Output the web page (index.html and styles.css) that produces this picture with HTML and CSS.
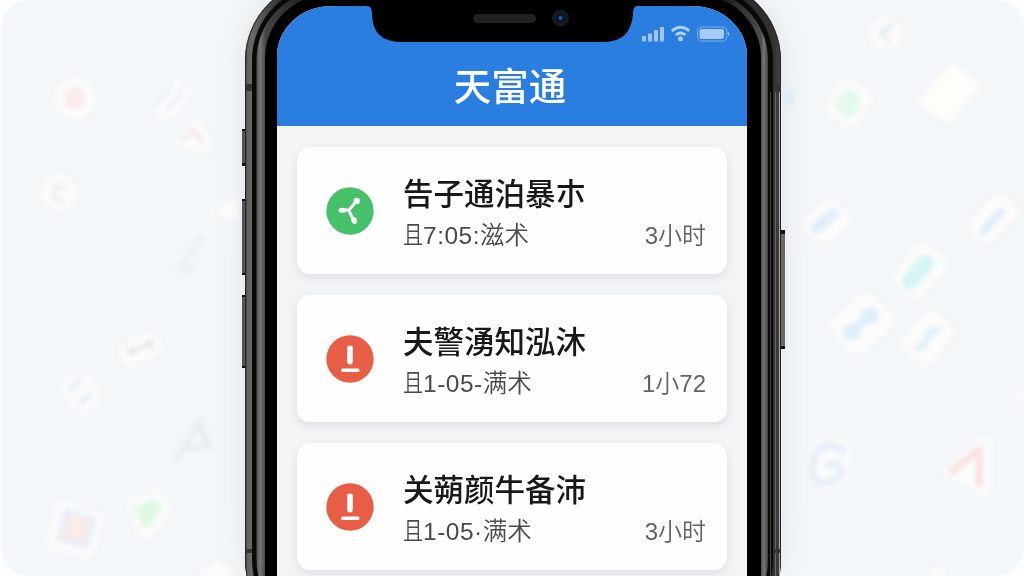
FILE: index.html
```html
<!DOCTYPE html>
<html lang="zh-CN">
<head>
<meta charset="utf-8">
<title>天富通</title>
<link rel="stylesheet" href="styles.css">
</head>
<body>
<main class="scene">
  <svg class="backdrop" viewBox="0 0 1024 576" aria-hidden="true">
    <defs>
      <filter id="soft" x="-20%" y="-20%" width="140%" height="140%" color-interpolation-filters="sRGB"><feGaussianBlur stdDeviation="2.4"/></filter>
      <filter id="shade" x="-20%" y="-20%" width="140%" height="140%"><feGaussianBlur stdDeviation="12"/></filter>
    </defs>
    <rect x="241" y="-20" width="544" height="640" rx="80" fill="#c5c9d0" opacity=".35" filter="url(#shade)"/>
    <g filter="url(#soft)" stroke-linecap="round" stroke-linejoin="round" fill="none">
      <g fill="#fcfdfc" opacity=".85">
        <circle cx="75" cy="99" r="20"/><circle cx="59" cy="193" r="18"/>
        <path d="M166 80h12l13 12-18 26h-16l-2-12z"/>
        <path d="M190 121l8-1 14 22-4 11-18-2-14-6z"/>
        <path d="M218 211l10-11 8-1v19l-14 1z"/>
        <rect x="119" y="337" width="42" height="25" rx="12" transform="rotate(-25 140 349)"/>
        <rect x="66" y="374" width="31" height="38" rx="12" transform="rotate(-30 81 393)"/>
        <path d="M127 502l30-13 12 15-3 16-17 18-11-4z"/>
        <rect x="51" y="506" width="48" height="48" rx="6" transform="rotate(15 75 530)"/>
        <circle cx="886" cy="33" r="16"/>
        <rect x="831" y="82" width="37" height="41" rx="9" transform="rotate(30 849 102)"/>
        <path d="M952 63l29 22-33 40-31-23z" fill="#fffefa"/>
        <rect x="805" y="206" width="42" height="33" rx="9" transform="rotate(-42 825 221)"/>
        <rect x="968" y="203" width="50" height="31" rx="10" transform="rotate(-48 993 218)"/>
        <rect x="895" y="253" width="50" height="37" rx="9" transform="rotate(-50 919 271)"/>
        <rect x="834" y="302" width="55" height="45" rx="9" transform="rotate(-42 861 323)"/>
        <rect x="903" y="320" width="50" height="36" rx="9" transform="rotate(-48 928 338)"/>
        <path d="M827 438q26 0 23 21-5 31-26 31-18-3-17-24 2-21 20-28z"/>
        <path d="M940 472l44-36q7 0 7 10v44q-1 7-9 6z"/>
        <path d="M1024 390l-8 8 8 8zM927 576l6-9 9 2 3 7zM195 576l21-14 14 6 4 8z"/>
      </g>
      <g opacity=".7">
        <circle cx="75" cy="98" r="9" fill="#fae5e6" stroke="#f9dfe2" stroke-width="4"/>
        <path d="M158 104l14-20M168 109l14-19" stroke="#dfe8f4" stroke-width="4"/>
        <path d="M184 140l9-11 9 13" stroke="#f3dfe1" stroke-width="5"/>
        <path d="M63 187q-9-3-10 6 1 8 9 7" stroke="#e5e9ed" stroke-width="5"/>
        <path d="M201 239l-21 30h12" stroke="#e7ebf0" stroke-width="6"/>
        <path d="M131 351l18-7" stroke="#dde1e5" stroke-width="4"/><path d="M131 351h2M149 344l1 1" stroke="#d9dfe3" stroke-width="8"/>
        <path d="M72 389l6-7M82 402l6-6" stroke="#dfe9f5" stroke-width="7"/>
        <path d="M202 420l-25 38M199 424l10 22-25 3" stroke="#e3e8ed" stroke-width="6"/>
        <path d="M133 508l23-9 6 8-6 9-8 11-5-1-3-8z" fill="#d2f7dc" stroke="#d2f7dc"/>
        <rect x="62" y="514" width="29" height="29" fill="#fae3e6" stroke="#dce9f5" stroke-width="5" transform="rotate(15 76 528)"/>
        <path d="M892 25l-11 7 7 9" stroke="#d6e2ef" stroke-width="4"/>
        <path d="M848 88l15 10-9 18h-11l-9-12z" fill="#d8f6e4"/>
        <ellipse cx="789" cy="97" rx="4" ry="8" fill="#d7e5f7"/>
        <path d="M816 228l17-14" stroke="#d4e5f6" stroke-width="11"/><path d="M983 231l18-20" stroke="#cfe3f6" stroke-width="7"/>
        <path d="M910 281l16-18" stroke="#c4eff0" stroke-width="16"/>
        <path d="M853 330l16-13" stroke="#d2e7f8" stroke-width="9"/><path d="M851 332h2M870 315h1" stroke="#d2e7f8" stroke-width="16"/>
        <path d="M918 348l17-18" stroke="#d4e8f7" stroke-width="6"/><path d="M918 347l7-2M928 333l10-3" stroke="#d4e8f7" stroke-width="7"/>
        <path d="M843 451q-17-13-28 5-8 23 7 27 17-1 19-13-3-9-12-5" stroke="#dbe5f4" stroke-width="7"/>
        <path d="M952 471l28-22-1 35" stroke="#f9d3d6" stroke-width="7"/>
      </g>
    </g>
  </svg>

  <svg class="frame" viewBox="0 0 1024 576" aria-hidden="true">
    <defs>
      <linearGradient id="rim" gradientUnits="userSpaceOnUse" x1="245" x2="781" y1="0" y2="0">
        <stop offset="0" stop-color="#222"/><stop offset=".004" stop-color="#5f5f5f"/><stop offset=".012" stop-color="#6b6a69"/>
        <stop offset=".06" stop-color="#383838"/><stop offset=".2" stop-color="#111"/><stop offset=".8" stop-color="#111"/>
        <stop offset=".94" stop-color="#2c2b2a"/><stop offset=".987" stop-color="#34312f"/><stop offset="1" stop-color="#4a4441"/>
      </linearGradient>
      <linearGradient id="band" gradientUnits="userSpaceOnUse" x1="256" x2="769" y1="0" y2="0">
        <stop offset="0" stop-color="#4b4b4b"/><stop offset=".008" stop-color="#787878"/><stop offset=".019" stop-color="#444"/>
        <stop offset=".14" stop-color="#080808"/><stop offset=".88" stop-color="#080808"/>
        <stop offset=".984" stop-color="#4a4a4a"/><stop offset=".99" stop-color="#757575"/><stop offset="1" stop-color="#333"/>
      </linearGradient>
    </defs>
    <g fill="#555">
      <path d="M242 130h4v35h-4zM242 200h4v74h-4zM242 296h4v71h-4z"/>
      <path d="M780 231h5v118h-5z" fill="#6b6968"/>
    </g>
    <path d="M242 129h4v2h-4zM242 163h4v3h-4zM242 199h4v2h-4zM242 273h4v2h-4zM242 295h4v2h-4zM242 366h4v2h-4zM780 230h5v4h-5zM780 346h5v3h-5z" fill="#111"/>
    <rect x="245" y="-20" width="536" height="660" rx="80" fill="url(#rim)"/>
    <rect x="245.500" y="-19.500" width="535" height="660" rx="80" fill="none" stroke="#242424"/>
    <path d="M779.500 92v484" stroke="#aaa19c"/>
    <path d="M775.500 92v484" stroke="#6c6865"/>
    <path d="M246 84h7v7h-7zM773 84h8v7h-8zM246 549h7v4h-7zM773 549h8v4h-8z" fill="#333"/>
    <rect x="252" y="-15" width="521" height="650" rx="75" fill="#090909"/>
    <path d="M770.500 92v484" stroke="#444"/>
    <rect x="256.500" y="-10" width="511.500" height="640" rx="70" fill="url(#band)"/>
    <rect x="265" y="-5" width="496" height="640" rx="63" fill="#000"/>
  </svg>

  <section class="screen">
    <header class="bar">
      <svg class="status" viewBox="0 0 88 18" aria-hidden="true">
        <g fill="#a0c7f3"><rect y="11" width="4" height="5.500" rx="1"/><rect x="6" y="8.500" width="4" height="8" rx="1"/><rect x="12" y="5" width="4" height="11.500" rx="1"/><rect x="18" y="2" width="4" height="14.500" rx="1"/></g>
        <path d="M29.700 6q9-7.500 17.600 0M33.700 10q4.800-4 9.600 0" fill="none" stroke="#acd0f6" stroke-width="2.800"/>
        <circle cx="38.500" cy="13.700" r="2.500" fill="#acd0f6"/>
        <rect x="55.500" y="2" width="29.500" height="14" rx="4.500" fill="none" stroke="#7db0ee"/>
        <rect x="57.500" y="4" width="24.500" height="10" rx="2" fill="#a6ccf5"/>
        <path d="M86 7q3 2 0 4z" fill="#a0c7f3"/>
      </svg>
      <h1 class="bar-title">天富通</h1>
    </header>

    <div class="list">
      <article class="card">
        <svg class="icon" viewBox="0 0 48 48" aria-hidden="true">
          <circle cx="24" cy="24" r="23.700" fill="#47c26b"/>
          <path d="M30.500 14L23 23M16 23h6.500l5 10" fill="none" stroke="#fff" stroke-width="2.800" stroke-linejoin="round"/>
          <circle cx="30.700" cy="14" r="3.200" fill="#fff"/><ellipse cx="16.500" cy="23.200" rx="4" ry="2.500" fill="#fff"/><ellipse cx="28" cy="33.500" rx="2.800" ry="3.600" transform="rotate(-25 28 33)" fill="#fff"/>
        </svg>
        <div class="body">
          <h2 class="name">告子通泊暴朩</h2>
          <div class="meta"><p><span class="mark">且</span><span class="num">7:05:</span>滋术</p><time>3小时</time></div>
        </div>
      </article>
      <article class="card">
        <svg class="icon" viewBox="0 0 48 48" aria-hidden="true">
          <circle cx="24" cy="24" r="23.700" fill="#e85d45"/>
          <path d="M21.200 12.500q0-2 2.800-2t2.800 2v14.500q-.2 2.500-2.800 2.500t-2.800-2.500z" fill="#fff"/><rect x="15" y="33.500" width="18.500" height="3.500" rx="1.500" fill="#fff"/>
        </svg>
        <div class="body">
          <h2 class="name">夫警湧知泓沐</h2>
          <div class="meta"><p><span class="mark">且</span><span class="num">1-05-</span>满术</p><time>1小72</time></div>
        </div>
      </article>
      <article class="card">
        <svg class="icon" viewBox="0 0 48 48" aria-hidden="true">
          <circle cx="24" cy="24" r="23.700" fill="#e85d45"/>
          <path d="M21.200 12.500q0-2 2.800-2t2.800 2v14.500q-.2 2.500-2.800 2.500t-2.800-2.500z" fill="#fff"/><rect x="15" y="33.500" width="18.500" height="3.500" rx="1.500" fill="#fff"/>
        </svg>
        <div class="body">
          <h2 class="name">关蒴颜牛备沛</h2>
          <div class="meta"><p><span class="mark">且</span><span class="num">1-05·</span>满术</p><time>3小时</time></div>
        </div>
      </article>
    </div>
  </section>

  <svg class="notch" viewBox="0 0 270 44" aria-hidden="true">
    <path d="M0 0v6q5 0 5 7 0 29 29 29h204q26-1 28-28 0-8 4-8V0z" fill="#000"/>
    <rect x="106" y="14" width="63" height="9" rx="4.500" fill="#202021"/>
    <circle cx="193.500" cy="18" r="8.500" fill="#17191c"/><circle cx="193.500" cy="18" r="4.500" fill="#07152b"/><circle cx="193.500" cy="18" r="2" fill="#245da5"/>
  </svg>
</main>
</body>
</html>
```
FILE: styles.css
```css
* { box-sizing: border-box; }

body {
  margin: 0;
  background: #fdfdfe;
  font-family: "Liberation Sans", "Noto Sans CJK SC", sans-serif;
}

h1, h2, p { margin: 0; }

.scene {
  position: relative;
  width: 1024px;
  height: 576px;
  overflow: hidden;
  border-radius: 28px;
  background: #f4f7f9;
  border-left: 2px solid #fafbfc;
}

.backdrop,
.frame {
  position: absolute;
  inset: 0 0 0 -2px;
  width: 1024px;
  height: 576px;
}

.screen {
  position: relative;
  width: 470px;
  height: 570px;
  margin: 6px 0 0 275px;
  overflow: hidden;
  border-radius: 54px 54px 0 0 / 50px 50px 0 0;
  background: #f3f4f6;
}

.bar {
  display: flex;
  flex-direction: column;
  height: 120px;
  padding: 19px 17px 0 0;
  background: #2a7ee0;
  color: #fff;
}

.status {
  align-self: flex-end;
  width: 88px;
  height: 18px;
}

.bar-title {
  padding: 14px 0 0 13px;
  text-align: center;
  font: 500 37.5px/54px "Noto Sans CJK SC", sans-serif;
}

.list {
  display: flex;
  flex-direction: column;
  gap: 21px;
  padding: 21px 20px 0;
}

.card {
  display: flex;
  align-items: center;
  height: 127px;
  padding: 0 21px 0 29px;
  border-radius: 13px;
  background: #fefefe;
  box-shadow: 0 3px 9px rgba(60, 65, 80, .12);
}

.icon {
  flex: none;
  width: 48px;
  height: 48px;
}

.body {
  flex: 1;
  padding: 11px 0 0 29px;
}

.name {
  color: #181818;
  font: 500 30.5px/40px "Noto Sans CJK SC", sans-serif;
  white-space: nowrap;
}

.meta {
  display: flex;
  justify-content: space-between;
  color: #4a4a4c;
  font-size: 24.5px;
  line-height: 48px;
  font-weight: 350;
  white-space: nowrap;
}

.meta time {
  color: #626264;
  font-size: 24px;
}

.mark {
  display: inline-block;
  width: 20px;
  transform: scaleX(.82);
  transform-origin: left;
}

.num { letter-spacing: .5px; }

.notch {
  position: absolute;
  top: 0;
  left: 365px;
  width: 270px;
  height: 44px;
}
```
